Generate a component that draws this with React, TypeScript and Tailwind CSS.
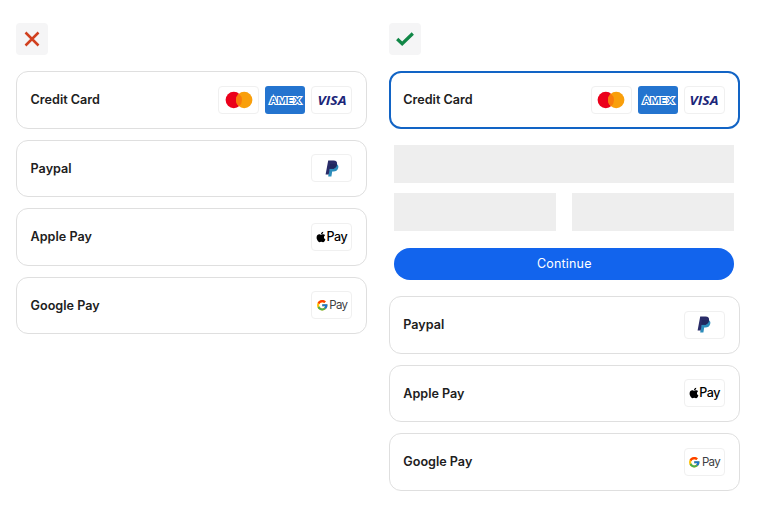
import type { ReactNode } from 'react';
import { FaApple } from 'react-icons/fa';
import { FcGoogle } from 'react-icons/fc';

function Logo({ children, blue = false }: { children: ReactNode; blue?: boolean }) {
  return (
    <div
      className={`flex h-7 items-center justify-center ${
        blue ? 'w-10 rounded-[3px] bg-[#2474cf]' : 'w-[41px] rounded-[4px] border border-[#f0f0f0] bg-white'
      }`}
    >
      {children}
    </div>
  );
}

function Mastercard() {
  return (
    <Logo>
      <svg width="28" height="18" viewBox="0 0 28 18">
        <circle cx="8.8" cy="9" r="8.2" fill="#eb001b" />
        <circle cx="19.2" cy="9" r="8.2" fill="#f99f0b" />
        <path d="M14 2.66a8.2 8.2 0 0 1 0 12.68a8.2 8.2 0 0 1 0-12.68Z" fill="#f97a0c" />
      </svg>
    </Logo>
  );
}

function Amex() {
  return (
    <Logo blue>
      <svg width="40" height="28" viewBox="0 0 40 28">
        <text
          x="4.5"
          y="17.6"
          textLength="31.5"
          lengthAdjust="spacingAndGlyphs"
          className="fill-[#2474cf] stroke-white font-['Inter',sans-serif] text-[9.5px] font-semibold"
          strokeWidth="2.2"
          paintOrder="stroke"
          strokeLinejoin="miter"
        >
          AMEX
        </text>
      </svg>
    </Logo>
  );
}

function Visa() {
  return (
    <Logo>
      <svg width="34" height="20" viewBox="0 0 34 20" className="overflow-visible">
        <text
          x="2.5"
          y="14.5"
          textLength="29"
          lengthAdjust="spacingAndGlyphs"
          className="fill-[#1c2679] font-['Open_Sans',sans-serif] text-[13px] font-bold italic"
        >
          VISA
        </text>
      </svg>
    </Logo>
  );
}

function Paypal() {
  return (
    <Logo>
      <svg width="14" height="17" viewBox="0 0 14 17">
        <path d="M5 4h6.6c1.7.8 2.1 2.4 1.6 4.1-.6 2.4-2.4 3.5-4.8 3.5H7.2l-.8 4.9H3.2Z" fill="#2d8dbb" />
        <path d="M3.2.6h5.3c2.7 0 4 1.4 3.5 3.8-.6 3-2.5 4.4-5.4 4.4H4.7l-1 5.6H.6Z" fill="#292c68" />
        <path d="M5.1 4h6.9v.4c-.6 3-2.5 4.4-5.4 4.4H4.3Z" fill="#20285f" />
      </svg>
    </Logo>
  );
}

function ApplePay() {
  return (
    <Logo>
      <div className="flex items-center gap-[0.5px] text-black">
        <FaApple className="h-[12px] w-[10px]" />
        <span className="font-['Inter',sans-serif] text-[12.5px] leading-4 font-medium tracking-[-0.45px]">Pay</span>
      </div>
    </Logo>
  );
}

function GooglePay() {
  return (
    <Logo>
      <div className="flex items-center gap-px text-[#3c4043]">
        <FcGoogle className="h-[12.5px] w-[12.5px]" />
        <span className="font-['Inter',sans-serif] text-[11.5px] leading-4 tracking-[-0.6px]">Pay</span>
      </div>
    </Logo>
  );
}

function Method({ name, children, selected = false }: { name: string; children: ReactNode; selected?: boolean }) {
  return (
    <div
      className={`flex h-[57.5px] shrink-0 items-center justify-between rounded-xl bg-white ${
        selected ? 'border-2 border-[#1264c5] pr-[13px] pl-[12.5px]' : 'border border-[#dfdfdf] pr-[14px] pl-[13.5px]'
      }`}
    >
      <span className="pt-[2px] text-[12.6px] font-semibold text-[#202020]">{name}</span>
      <div className="flex gap-[6px]">{children}</div>
    </div>
  );
}

function OtherMethods() {
  return (
    <>
      <Method name="Paypal">
        <Paypal />
      </Method>
      <Method name="Apple Pay">
        <ApplePay />
      </Method>
      <Method name="Google Pay">
        <GooglePay />
      </Method>
    </>
  );
}

function CardLogos() {
  return (
    <>
      <Mastercard />
      <Amex />
      <Visa />
    </>
  );
}

export default function App() {
  return (
    <main className="flex h-[514px] w-[757px] gap-[21.7px] bg-white pt-[22.5px] pl-[16.1px] font-['Inter',sans-serif]">
      <section className="w-[351px]">
        <div className="mb-[16.7px] flex h-8 w-8 items-center justify-center rounded-[4px] bg-[#f5f5f6]">
          <svg width="16" height="16" viewBox="0 0 16 16" fill="none" stroke="#d1401f" strokeWidth="2.5">
            <path d="M1.5 1.5 14.5 14.5M14.5 1.5 1.5 14.5" />
          </svg>
        </div>
        <div className="flex flex-col gap-[11px]">
          <Method name="Credit Card">
            <CardLogos />
          </Method>
          <OtherMethods />
        </div>
      </section>
      <section className="w-[351px]">
        <div className="mb-[16.7px] flex h-8 w-8 items-center justify-center rounded-[4px] bg-[#f5f5f6]">
          <svg width="20" height="16" viewBox="0 0 20 16" fill="none" stroke="#118747" strokeWidth="3.2">
            <path d="m2.2 8 5 4.7L17.8 2.5" />
          </svg>
        </div>
        <Method name="Credit Card" selected>
          <CardLogos />
        </Method>
        <div className="flex flex-col px-[5.4px] pt-4 pb-[16.5px]">
          <div className="h-[38px] bg-[#eeeeee]" />
          <div className="mt-[10.5px] grid grid-cols-2 gap-4">
            <div className="h-[38px] bg-[#eeeeee]" />
            <div className="h-[38px] bg-[#eeeeee]" />
          </div>
          <button className="mt-[16.4px] h-8 rounded-full bg-[#1264ed] pt-[1.5px] text-[12.5px] tracking-[0.2px] text-white">
            Continue
          </button>
        </div>
        <div className="flex flex-col gap-[11px]">
          <OtherMethods />
        </div>
      </section>
    </main>
  );
}
